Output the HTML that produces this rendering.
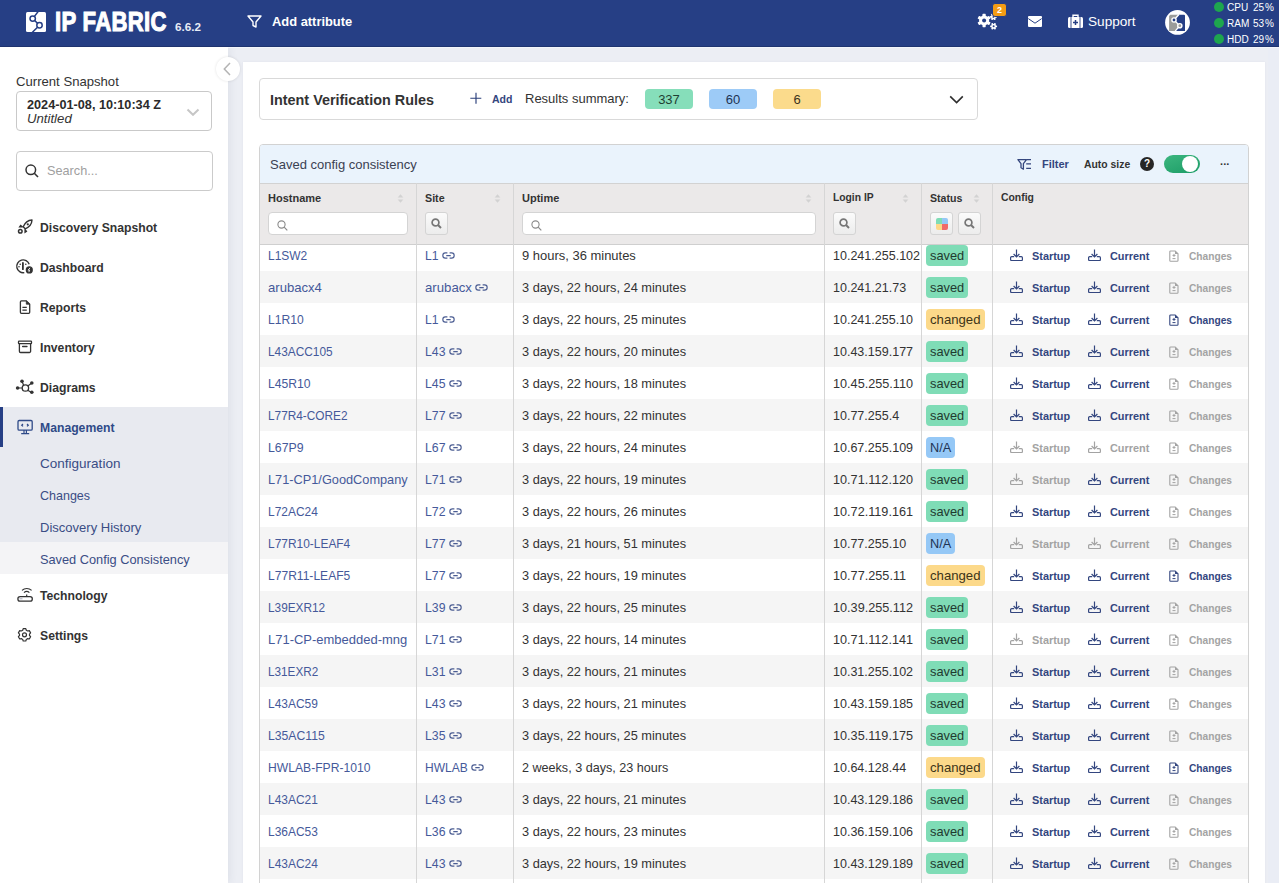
<!DOCTYPE html>
<html><head><meta charset="utf-8">
<style>
*{box-sizing:border-box;margin:0;padding:0}
html,body{width:1279px;height:883px;overflow:hidden}
body{position:relative;background:#eceef4;font-family:"Liberation Sans",sans-serif;color:#333}
.a{position:absolute;white-space:nowrap}
svg{display:block}
/* header */
#hdr{position:absolute;left:0;top:0;width:1279px;height:47px;background:#263f85;border-bottom:1px solid #1f3470}
.wt{color:#fff}
/* sidebar */
#side{position:absolute;left:0;top:47px;width:228px;height:836px;background:#fff;box-shadow:2px 0 8px rgba(40,50,80,0.07)}
.nav{position:absolute;left:40px;font-size:12.2px;font-weight:bold;color:#333;line-height:16px;margin-top:1px}
.navi{position:absolute;left:17px;width:16px;height:16px;color:#333}
.sub{position:absolute;left:40px;font-size:13px;color:#3a4d85;line-height:16px;margin-top:1px}
/* card */
#card{position:absolute;left:243px;top:62px;width:1022px;height:830px;background:#fff}
#intent{position:absolute;left:259px;top:78px;width:719px;height:42px;border:1px solid #d9d9d9;border-radius:4px;background:#fff}
.sumb{position:absolute;top:89px;width:48px;height:20px;border-radius:4px;font-size:13px;line-height:20px;padding-top:1px;text-align:center;color:#333}
/* table */
#tbl{position:absolute;left:259px;top:144px;width:990px;height:760px;border:1px solid #d2d2d2;border-radius:4px 4px 0 0;overflow:hidden;background:#fff}
#tbar{position:absolute;left:0;top:0;width:988px;height:39px;background:#eaf3fc;border-bottom:1px solid #d2d2d2}
#thead{position:absolute;left:0;top:39px;width:988px;height:61px;background:#ebe9e9;border-bottom:1px solid #cfcfcf;z-index:2}
.vline{position:absolute;top:38px;width:1px;height:740px;background:#d6d6d6;z-index:3}
.hl{position:absolute;top:7px;font-size:11px;font-weight:bold;color:#333;line-height:14px}
.sort{position:absolute;top:10px;width:7px;height:9px}
.fin{position:absolute;top:28px;height:23px;background:#fff;border:1px solid #d4d4d4;border-radius:4px}
.fbtn{position:absolute;top:28px;width:23px;height:23px;border:1px solid #d4d4d4;border-radius:3px;background:linear-gradient(#fbfbfb,#ececec)}
.row{position:absolute;left:0;width:988px;height:32px;z-index:1}
.row.odd{background:#fff}
.row.even{background:#f5f5f5}
.c{position:absolute;top:0;height:32px;line-height:32px;padding-top:1px;font-size:13px;color:#333;white-space:nowrap}
.t{display:inline-block;transform-origin:0 0}
.lkw{position:absolute;top:1px}
.c1{left:8px;color:#45599a}
.c2{left:165px;color:#45599a}
.c3{left:262px}
.c4{left:573px}
.c5{left:666px}
.c6{left:750px}
.lk{display:inline-block;vertical-align:middle;position:relative;top:-1px;color:#4a5c92}
.badge{position:absolute;top:6px;left:0;height:21.5px;line-height:21px;padding:0.5px 4px 0;border-radius:4px;font-size:13px;color:#2f3a3a}
.bs{background:#7fdcb6;color:#1f3a30}
.bc{background:#fcd98a;color:#3d3418}
.bn{background:#95c8f6;color:#1e3352}
.cf{position:relative;display:inline-block;height:32px;font-size:10.9px}
.cf .ic{position:absolute;top:9px;left:0}
.cf b{position:absolute;left:22px;top:0.5px;line-height:32px;font-weight:bold}
.cf.on{color:#33467f}
.cf.off{color:#a3a3a3}

.cf:nth-child(1){position:absolute;left:0}
.cf:nth-child(2){position:absolute;left:78px}
.cf:nth-child(3){position:absolute;left:158px}
.cf:nth-child(3) b{left:21px;font-size:10.2px;top:1.5px}
.cf .dc{top:10px;left:0.5px}
</style></head><body>

<!-- HEADER -->
<div id="hdr">
  <svg class="a" style="left:26px;top:12px" width="20" height="20" viewBox="0 0 20 20">
    <rect x="0" y="0" width="20" height="20" rx="1.5" fill="#fff"/>
    <path d="M12.2 -0.5L6.7 6.6L13.5 13.2L6.2 20.5" fill="none" stroke="#263f85" stroke-width="1.5"/>
    <circle cx="6.7" cy="6.6" r="2.7" fill="#fff" stroke="#263f85" stroke-width="1.5"/>
    <circle cx="13.5" cy="13.2" r="2.7" fill="#fff" stroke="#263f85" stroke-width="1.5"/>
  </svg>
  <div class="a wt" style="left:55px;top:6px;font-size:28px;line-height:32px;font-weight:bold;transform:scaleX(0.79);transform-origin:0 0;letter-spacing:0.4px;-webkit-text-stroke:1.1px #fff">IP FABRIC</div>
  <div class="a wt" style="left:175px;top:20px;font-size:11.7px;line-height:14px;font-weight:bold;color:#e8ecf6">6.6.2</div>
  <svg class="a" style="left:247px;top:15px" width="15" height="13" viewBox="0 0 15 13"><path d="M1 1h13L9 7v5L6 10.5V7z" fill="none" stroke="#fff" stroke-width="1.4" stroke-linejoin="round"/></svg>
  <div class="a wt" style="left:272px;top:14px;font-size:12.9px;line-height:16px;font-weight:bold">Add attribute</div>

  <svg class="a" style="left:976px;top:11px" width="24" height="22" viewBox="0 0 24 22"><circle cx="8.1" cy="9.5" r="5.0" fill="#fff"/><rect x="6.50" y="2.80" width="3.2" height="6.70" rx="0.6" fill="#fff" transform="rotate(0.0 8.1 9.5)"/><rect x="6.50" y="2.80" width="3.2" height="6.70" rx="0.6" fill="#fff" transform="rotate(60.0 8.1 9.5)"/><rect x="6.50" y="2.80" width="3.2" height="6.70" rx="0.6" fill="#fff" transform="rotate(120.0 8.1 9.5)"/><rect x="6.50" y="2.80" width="3.2" height="6.70" rx="0.6" fill="#fff" transform="rotate(180.0 8.1 9.5)"/><rect x="6.50" y="2.80" width="3.2" height="6.70" rx="0.6" fill="#fff" transform="rotate(240.0 8.1 9.5)"/><rect x="6.50" y="2.80" width="3.2" height="6.70" rx="0.6" fill="#fff" transform="rotate(300.0 8.1 9.5)"/><circle cx="8.1" cy="9.5" r="2.0" fill="#263f85"/><circle cx="17.4" cy="5.9" r="2.3" fill="#fff"/><rect x="16.50" y="2.50" width="1.8" height="3.40" rx="0.6" fill="#fff" transform="rotate(30.0 17.4 5.9)"/><rect x="16.50" y="2.50" width="1.8" height="3.40" rx="0.6" fill="#fff" transform="rotate(90.0 17.4 5.9)"/><rect x="16.50" y="2.50" width="1.8" height="3.40" rx="0.6" fill="#fff" transform="rotate(150.0 17.4 5.9)"/><rect x="16.50" y="2.50" width="1.8" height="3.40" rx="0.6" fill="#fff" transform="rotate(210.0 17.4 5.9)"/><rect x="16.50" y="2.50" width="1.8" height="3.40" rx="0.6" fill="#fff" transform="rotate(270.0 17.4 5.9)"/><rect x="16.50" y="2.50" width="1.8" height="3.40" rx="0.6" fill="#fff" transform="rotate(330.0 17.4 5.9)"/><circle cx="17.4" cy="5.9" r="0.9" fill="#263f85"/><circle cx="17.6" cy="15.3" r="2.4" fill="#fff"/><rect x="16.70" y="11.80" width="1.8" height="3.50" rx="0.6" fill="#fff" transform="rotate(30.0 17.6 15.3)"/><rect x="16.70" y="11.80" width="1.8" height="3.50" rx="0.6" fill="#fff" transform="rotate(90.0 17.6 15.3)"/><rect x="16.70" y="11.80" width="1.8" height="3.50" rx="0.6" fill="#fff" transform="rotate(150.0 17.6 15.3)"/><rect x="16.70" y="11.80" width="1.8" height="3.50" rx="0.6" fill="#fff" transform="rotate(210.0 17.6 15.3)"/><rect x="16.70" y="11.80" width="1.8" height="3.50" rx="0.6" fill="#fff" transform="rotate(270.0 17.6 15.3)"/><rect x="16.70" y="11.80" width="1.8" height="3.50" rx="0.6" fill="#fff" transform="rotate(330.0 17.6 15.3)"/><circle cx="17.6" cy="15.3" r="1.0" fill="#263f85"/></svg>
  <div class="a" style="left:992px;top:3px;width:15px;height:14px;background:#f39c14;border:1px solid #263f85;border-radius:3px;color:#fff;font-size:9px;font-weight:bold;line-height:12px;text-align:center">2</div>
  <svg class="a" style="left:1028px;top:16px" width="14" height="11" viewBox="0 0 14 11"><rect x="0" y="0" width="14" height="11" rx="1" fill="#fff"/><path d="M0.3 2.6L7 7.2 13.7 2.6" fill="none" stroke="#263f85" stroke-width="1"/></svg>
  <svg class="a" style="left:1068px;top:14px" width="15" height="14" viewBox="0 0 15 14"><path d="M5 3V1.2h5V3" fill="none" stroke="#fff" stroke-width="1.4"/><rect x="0" y="3" width="15" height="11" rx="1.5" fill="#fff"/><path d="M3 3v11M12 3v11" stroke="#263f85" stroke-width="0.9"/><path d="M7.5 6v5M5 8.5h5" stroke="#263f85" stroke-width="1.5"/></svg>
  <div class="a wt" style="left:1088px;top:14px;font-size:13.4px;line-height:16px"><span class="t" style="font-size:13.0px;transform:scaleX(1.046)">Support</span></div>

  <svg class="a" style="left:1165px;top:10px" width="25" height="25" viewBox="0 0 25 25">
    <circle cx="12.5" cy="12.4" r="12.4" fill="#fff"/>
    <path d="M5.3 4.8H13.7L9 10 14.8 15.7 10.4 20.9H4.1V6z" fill="#9b9c9a"/>
    <path d="M13.7 4.8H19a1 1 0 0 1 1 1V20.9H10.4L14.8 15.7 9 10z" fill="#263f85"/>
    <path d="M13.9 4.5L9 10 14.8 15.7 10.2 21.2" fill="none" stroke="#fff" stroke-width="1.3"/>
    <circle cx="9" cy="10" r="2.1" fill="#263f85" stroke="#fff" stroke-width="1.4"/>
    <circle cx="14.8" cy="15.7" r="2.1" fill="#9b9c9a" stroke="#fff" stroke-width="1.4"/>
  </svg>

  <div class="a" style="left:1214px;top:2px;width:10px;height:10px;border-radius:50%;background:#1ea64e"></div>
  <div class="a" style="left:1214px;top:18px;width:10px;height:10px;border-radius:50%;background:#1ea64e"></div>
  <div class="a" style="left:1214px;top:34px;width:10px;height:10px;border-radius:50%;background:#1ea64e"></div>
  <div class="a wt" style="left:1227px;top:1px;font-size:10px;line-height:14px">CPU</div>
<div class="a wt" style="left:1253px;top:1px;font-size:10px;line-height:14px">25</div>
<div class="a wt" style="left:1265px;top:1px;font-size:10px;line-height:14px">%</div>
<div class="a wt" style="left:1227px;top:17px;font-size:10px;line-height:14px">RAM</div>
<div class="a wt" style="left:1253px;top:17px;font-size:10px;line-height:14px">53</div>
<div class="a wt" style="left:1265px;top:17px;font-size:10px;line-height:14px">%</div>
<div class="a wt" style="left:1227px;top:33px;font-size:10px;line-height:14px">HDD</div>
<div class="a wt" style="left:1253px;top:33px;font-size:10px;line-height:14px">29</div>
<div class="a wt" style="left:1265px;top:33px;font-size:10px;line-height:14px">%</div>
</div>

<!-- SIDEBAR -->
<div id="side"></div>
<div class="a" style="left:16px;top:74px;font-size:13.2px;line-height:16px;color:#333"><span class="t" style="font-size:13.0px;transform:scaleX(1.009)">Current Snapshot</span></div>
<div class="a" style="left:16px;top:91px;width:196px;height:40px;border:1px solid #c9c9c9;border-radius:4px"></div>
<div class="a" style="left:27px;top:96.5px;font-size:12.7px;line-height:16px;font-weight:bold;color:#2b2b2b">2024-01-08, 10:10:34 Z</div>
<div class="a" style="left:27px;top:110.5px;font-size:13.2px;line-height:16px;font-style:italic;color:#333">Untitled</div>
<svg class="a" style="left:186px;top:107.5px" width="14" height="8" viewBox="0 0 14 8"><path d="M1.5 1.5l5.5 5.3 5.5-5.3" fill="none" stroke="#c6c6c6" stroke-width="2"/></svg>

<div class="a" style="left:16px;top:151px;width:197px;height:40px;border:1px solid #cbcbcb;border-radius:4px"></div>
<svg class="a" style="left:25px;top:164px" width="14" height="14" viewBox="0 0 14 14"><circle cx="5.8" cy="5.8" r="4.8" fill="none" stroke="#333" stroke-width="1.5"/><path d="M9.3 9.3L13 13" stroke="#333" stroke-width="1.6"/></svg>
<div class="a" style="left:47px;top:163px;font-size:13px;line-height:16px;color:#a0a0a0"><span class="t" style="font-size:13.0px;transform:scaleX(0.976)">Search...</span></div>

<!-- nav -->
<svg class="a" style="left:12px;top:214px" width="28" height="28" viewBox="0 0 28 28"><path d="M11.2 12.8C13 8.5 16 6.2 20 6c-0.2 4-2.5 7-6.8 8.8z" fill="none" stroke="#333" stroke-width="1.4" stroke-linejoin="round"/><circle cx="15.8" cy="10.3" r="1.1" fill="#333"/><path d="M11.2 12.8L8.5 10.6 6.4 13.6h4.2zM13.2 14.8l2.2 2.6-3 2v-4.2z" fill="#333"/><circle cx="8.3" cy="17.3" r="1.8" fill="none" stroke="#333" stroke-width="1.5"/></svg>
<div class="nav" style="top:219px">Discovery Snapshot</div>

<svg class="a" style="left:12px;top:254px" width="28" height="28" viewBox="0 0 28 28"><path d="M17.2 10.2A6.4 6.4 0 1 0 12.3 18.6" fill="none" stroke="#333" stroke-width="1.4"/><path d="M10.9 8.8v6.4" stroke="#333" stroke-width="1.8" stroke-linecap="round"/><circle cx="8.2" cy="10.2" r="0.8" fill="#333"/><circle cx="13.8" cy="10.2" r="0.8" fill="#333"/><circle cx="7" cy="12.8" r="0.8" fill="#333"/><circle cx="17.3" cy="15.9" r="3.6" fill="#333"/><path d="M18 13.9l-1.9 2.3h1.6l-0.9 1.9" fill="none" stroke="#fff" stroke-width="0.9"/></svg>
<div class="nav" style="top:259px">Dashboard</div>

<svg class="a" style="left:12px;top:294px" width="28" height="28" viewBox="0 0 28 28"><path d="M14.3 6.9H9.4a1 1 0 0 0-1 1v10.4a1 1 0 0 0 1 1h7.3a1 1 0 0 0 1-1V10.2z" fill="none" stroke="#333" stroke-width="1.3" stroke-linejoin="round"/><path d="M14.3 6.9v3.3h3.4z" fill="#333" stroke="#333" stroke-width="0.8" stroke-linejoin="round"/><path d="M10.4 13.4h4.4M10.4 16.2h4.4" stroke="#333" stroke-width="1.2"/></svg>
<div class="nav" style="top:299px">Reports</div>

<svg class="a" style="left:12px;top:334px" width="28" height="28" viewBox="0 0 28 28"><rect x="6.5" y="7.1" width="13" height="2.6" rx="0.6" fill="none" stroke="#333" stroke-width="1.3"/><path d="M7.4 9.7v7.6a1.2 1.2 0 0 0 1.2 1.2h8.8a1.2 1.2 0 0 0 1.2-1.2V9.7" fill="none" stroke="#333" stroke-width="1.3"/><path d="M10.6 12.5h4.4" stroke="#333" stroke-width="1.3" stroke-linecap="round"/></svg>
<div class="nav" style="top:339px">Inventory</div>

<svg class="a" style="left:12px;top:374px" width="28" height="28" viewBox="0 0 28 28"><circle cx="13.4" cy="14" r="3.2" fill="none" stroke="#333" stroke-width="1.3"/><path d="M5.6 14h4.6M10 7.3l1.6 3.9M19.8 9l-4 2.9M19.8 18.8l-4-2.6" stroke="#333" stroke-width="1.2"/><circle cx="5.6" cy="14" r="1.8" fill="#333"/><circle cx="10" cy="7.3" r="1.8" fill="#333"/><circle cx="19.8" cy="9" r="1.8" fill="#333"/><circle cx="19.8" cy="18.2" r="1.8" fill="#333"/></svg>
<div class="nav" style="top:379px">Diagrams</div>

<div class="a" style="left:0;top:407px;width:228px;height:135px;background:#e8eaf0"></div>
<div class="a" style="left:0;top:542px;width:228px;height:32px;background:#f4f4f6"></div>
<div class="a" style="left:0;top:407px;width:3px;height:40px;background:#263f85"></div>
<svg class="a" style="left:12px;top:413px" width="28" height="28" viewBox="0 0 28 28"><rect x="6" y="7.5" width="14.2" height="9.6" rx="1.2" fill="none" stroke="#2f4a88" stroke-width="1.3"/><path d="M12 17.1v3M14.4 17.1v3M9.2 20.6h8" stroke="#2f4a88" stroke-width="1.2"/><path d="M11 11l-1.3 1.2 1.3 1.2M15 11l1.3 1.2-1.3 1.2" fill="none" stroke="#2f4a88" stroke-width="1.2"/></svg>
<div class="nav" style="top:419px;color:#2f4a88">Management</div>
<div class="sub" style="top:455px"><span class="t" style="font-size:13.0px;transform:scaleX(1.040)">Configuration</span></div>
<div class="sub" style="top:487px"><span class="t" style="font-size:13.0px;transform:scaleX(0.962)">Changes</span></div>
<div class="sub" style="top:519px"><span class="t" style="font-size:13.0px;transform:scaleX(1.002)">Discovery History</span></div>
<div class="sub" style="top:551px"><span class="t" style="font-size:13.0px;transform:scaleX(0.982)">Saved Config Consistency</span></div>

<svg class="a" style="left:12px;top:581px" width="28" height="28" viewBox="0 0 28 28"><path d="M10 9.4a7 7 0 0 1 9.6 0M12 11.6a4 4 0 0 1 5.4 0M14.7 13.4v1.9" fill="none" stroke="#333" stroke-width="1.2"/><rect x="5.9" y="15.6" width="14.4" height="4.6" rx="2.2" fill="none" stroke="#333" stroke-width="1.3"/><path d="M7.5 17.8h3" stroke="#aab" stroke-width="1"/></svg>
<div class="nav" style="top:587px">Technology</div>

<svg class="a" style="left:12px;top:621px" width="28" height="28" viewBox="0 0 28 28"><circle cx="12.5" cy="13.8" r="2" fill="none" stroke="#333" stroke-width="1.2"/><path d="M11.2 7.6h2.6l0.5 1.6 1.4 0.8 1.6-0.4 1.3 2.3-1.1 1.2v1.4l1.1 1.2-1.3 2.3-1.6-0.4-1.4 0.8-0.5 1.6h-2.6l-0.5-1.6-1.4-0.8-1.6 0.4-1.3-2.3 1.1-1.2v-1.4l-1.1-1.2 1.3-2.3 1.6 0.4 1.4-0.8z" fill="none" stroke="#333" stroke-width="1.2" stroke-linejoin="round"/></svg>
<div class="nav" style="top:627px">Settings</div>

<!-- MAIN -->
<div class="a" style="left:1268px;top:47px;width:11px;height:836px;background:#eaedf5"></div>
<div class="a" style="left:228px;top:47px;width:1051px;height:1px;background:#f3f5fb"></div>
<div id="card" style="box-shadow:0 0 2px rgba(40,50,80,0.06)"></div>
<div class="a" style="left:216px;top:57px;width:24px;height:24px;border-radius:50%;background:#fff;box-shadow:0 0 3px rgba(0,0,0,0.12)"></div>
<svg class="a" style="left:223px;top:62px" width="8" height="14" viewBox="0 0 8 14"><path d="M7 1L1.3 7 7 13" fill="none" stroke="#b4b4b4" stroke-width="1.5"/></svg>

<div id="intent"></div>
<div class="a" style="left:270px;top:91px;font-size:14.4px;line-height:18px;font-weight:bold;color:#333">Intent Verification Rules</div>
<svg class="a" style="left:470px;top:92px" width="12" height="12" viewBox="0 0 12 12"><path d="M6 0.8v11M0.3 6.2h11" stroke="#2a3f7a" stroke-width="1.15"/></svg>
<div class="a" style="left:492px;top:91px;font-size:10.5px;line-height:16px;font-weight:bold;color:#34467e">Add</div>
<div class="a" style="left:525px;top:91px;font-size:13px;line-height:16px;color:#333"><span class="t" style="font-size:13.0px;transform:scaleX(0.999)">Results summary:</span></div>
<div class="sumb" style="left:645px;background:#86deba;color:#1f3f33">337</div>
<div class="sumb" style="left:709px;background:#9dcbf7;color:#1e3352">60</div>
<div class="sumb" style="left:773px;background:#fbdb8c;color:#3a3220">6</div>
<svg class="a" style="left:949px;top:95px" width="15" height="9" viewBox="0 0 15 9"><path d="M1.2 1.4L7.6 7.6 13.8 1.4" fill="none" stroke="#2e2e2e" stroke-width="1.6"/></svg>

<!-- TABLE -->
<div id="tbl">
  <div id="tbar">
    <div class="a" style="left:10px;top:12px;font-size:12.9px;line-height:16px;color:#3a4152"><span class="t" style="font-size:13.0px;transform:scaleX(1.000)">Saved config consistency</span></div>
    <svg class="a" style="left:757px;top:14px" width="15" height="11" viewBox="0 0 15 11"><path d="M0.9 0.7h8.6L6.4 4.6v5.6L4 8.8V4.6z" fill="none" stroke="#34467e" stroke-width="1.3" stroke-linejoin="round"/><path d="M9.8 0.6h4.2M9.2 4.9h4.8M9.2 9.4h4.8" stroke="#34467e" stroke-width="1.1"/></svg>
    <div class="a" style="left:782px;top:11px;font-size:11px;line-height:16px;font-weight:bold;color:#34467e">Filter</div>
    <div class="a" style="left:824px;top:12px;font-size:10.4px;line-height:16px;font-weight:bold;color:#333">Auto size</div>
    <div class="a" style="left:880px;top:12px;width:14px;height:14px;border-radius:50%;background:#262626;color:#fff;font-size:10px;font-weight:bold;line-height:14px;text-align:center">?</div>
    <div class="a" style="left:904px;top:10px;width:36px;height:18px;border-radius:9px;background:linear-gradient(160deg,#3cb67f,#1c9c66);"></div>
    <div class="a" style="left:922px;top:11px;width:16px;height:16px;border-radius:50%;background:#fff"></div>
    <div class="a" style="left:960px;top:12px;font-size:11px;line-height:14px;font-weight:bold;color:#333;letter-spacing:-0.5px">···</div>
  </div>
  <div id="thead">
    <div class="hl" style="left:8px">Hostname</div>
    <div class="hl" style="left:165px;font-size:10.7px">Site</div>
    <div class="hl" style="left:262px">Uptime</div>
    <div class="hl" style="left:573px;font-size:10.3px">Login IP</div>
    <div class="hl" style="left:670px;font-size:10.6px">Status</div>
    <div class="hl" style="left:741px;font-size:10.4px">Config</div>
    <svg class="sort" style="left:137px" width="7" height="10" viewBox="0 0 7 9"><path d="M3.5 0.3L6.3 3.6H0.7zM3.5 8.7L6.3 5.4H0.7z" fill="#d2d2d2"/></svg>
<svg class="sort" style="left:234px" width="7" height="10" viewBox="0 0 7 9"><path d="M3.5 0.3L6.3 3.6H0.7zM3.5 8.7L6.3 5.4H0.7z" fill="#d2d2d2"/></svg>
<svg class="sort" style="left:545px" width="7" height="10" viewBox="0 0 7 9"><path d="M3.5 0.3L6.3 3.6H0.7zM3.5 8.7L6.3 5.4H0.7z" fill="#d2d2d2"/></svg>
<svg class="sort" style="left:642px" width="7" height="10" viewBox="0 0 7 9"><path d="M3.5 0.3L6.3 3.6H0.7zM3.5 8.7L6.3 5.4H0.7z" fill="#d2d2d2"/></svg>
<svg class="sort" style="left:713px" width="7" height="10" viewBox="0 0 7 9"><path d="M3.5 0.3L6.3 3.6H0.7zM3.5 8.7L6.3 5.4H0.7z" fill="#d2d2d2"/></svg>
    <div class="fin" style="left:8px;width:140px"></div>
    <div class="fbtn" style="left:165px"></div>
    <div class="fin" style="left:262px;width:294px"></div>
    <div class="fbtn" style="left:573px"></div>
    <div class="fbtn" style="left:670px"></div>
    <div class="fbtn" style="left:698px"></div>
    <svg class="a" style="left:17px;top:36px" width="11" height="11" viewBox="0 0 11 11"><circle cx="4.5" cy="4.5" r="3.6" fill="none" stroke="#8a8a8a" stroke-width="1.1"/><path d="M7.2 7.2L10.3 10.3" stroke="#8a8a8a" stroke-width="1.2"/></svg>
<svg class="a" style="left:171px;top:34px" width="11" height="11" viewBox="0 0 11 11"><circle cx="4.5" cy="4.5" r="3.4" fill="none" stroke="#777" stroke-width="1.7"/><path d="M7 7L10 10" stroke="#777" stroke-width="2"/></svg>
<svg class="a" style="left:271px;top:36px" width="11" height="11" viewBox="0 0 11 11"><circle cx="4.5" cy="4.5" r="3.6" fill="none" stroke="#8a8a8a" stroke-width="1.1"/><path d="M7.2 7.2L10.3 10.3" stroke="#8a8a8a" stroke-width="1.2"/></svg>
<svg class="a" style="left:579px;top:34px" width="11" height="11" viewBox="0 0 11 11"><circle cx="4.5" cy="4.5" r="3.4" fill="none" stroke="#777" stroke-width="1.7"/><path d="M7 7L10 10" stroke="#777" stroke-width="2"/></svg>
<svg class="a" style="left:676px;top:34px" width="12" height="12" viewBox="0 0 12 12"><path d="M2 0H6V6H0V2A2 2 0 0 1 2 0z" fill="#7fdcb5"/><path d="M6 0H10A2 2 0 0 1 12 2V6H6z" fill="#95c8f6"/><path d="M0 6H6V12H2A2 2 0 0 1 0 10z" fill="#fcd888"/><path d="M6 6H12V10A2 2 0 0 1 10 12H6z" fill="#f06a6a"/></svg>
<svg class="a" style="left:704px;top:34px" width="11" height="11" viewBox="0 0 11 11"><circle cx="4.5" cy="4.5" r="3.4" fill="none" stroke="#777" stroke-width="1.7"/><path d="M7 7L10 10" stroke="#777" stroke-width="2"/></svg>
  </div>
  <div class="vline" style="left:156px"></div>
  <div class="vline" style="left:253px"></div>
  <div class="vline" style="left:564px"></div>
  <div class="vline" style="left:661px"></div>
  <div class="vline" style="left:732px"></div>
<div class="row odd" style="top:93.5px"><div class="c c1"><span class="t" style="transform:scaleX(0.920)">L1SW2</span></div><div class="c c2"><span class="t" style="transform:scaleX(0.934)">L1</span><span class="lkw" style="left:16.5px"><svg class="lk" width="13" height="7" viewBox="0 0 14 7" preserveAspectRatio="none"><path d="M5.8 0.8H3.6a2.7 2.7 0 0 0 0 5.4H5.8M8.2 0.8h2.2a2.7 2.7 0 0 1 0 5.4H8.2M4.6 3.5h4.8" fill="none" stroke="currentColor" stroke-width="1.25"/></svg></span></div><div class="c c3"><span class="t" style="transform:scaleX(0.997)">9 hours, 36 minutes</span></div><div class="c c4"><span class="t" style="transform:scaleX(0.963)">10.241.255.102</span></div><div class="c c5"><span class="badge bs" style="width:42.2px"><span class="t" style="transform:scaleX(0.986)">saved</span></span></div><div class="c c6"><span class="cf on"><svg class="ic" width="13" height="12" viewBox="0 0 13 12"><path d="M4.2 7.7H1.7a1.1 1.1 0 0 0-1.1 1.1v1.7a1.1 1.1 0 0 0 1.1 1.1h9.6a1.1 1.1 0 0 0 1.1-1.1V8.8a1.1 1.1 0 0 0-1.1-1.1H8.8M6.5 0.6v7.4M3.6 5l2.9 2.9L9.4 5" fill="none" stroke="currentColor" stroke-width="1.2"/></svg><b>Startup</b></span><span class="cf on"><svg class="ic" width="13" height="12" viewBox="0 0 13 12"><path d="M4.2 7.7H1.7a1.1 1.1 0 0 0-1.1 1.1v1.7a1.1 1.1 0 0 0 1.1 1.1h9.6a1.1 1.1 0 0 0 1.1-1.1V8.8a1.1 1.1 0 0 0-1.1-1.1H8.8M6.5 0.6v7.4M3.6 5l2.9 2.9L9.4 5" fill="none" stroke="currentColor" stroke-width="1.2"/></svg><b>Current</b></span><span class="cf off"><svg class="ic dc" width="10" height="12" viewBox="0 0 10 12"><path d="M1.6 1h4.6l2.8 2.8v6.6a0.8 0.8 0 0 1-0.8 0.8H1.6a0.8 0.8 0 0 1-0.8-0.8V1.8a0.8 0.8 0 0 1 0.8-0.8z" fill="none" stroke="currentColor" stroke-width="1.1"/><path d="M6 1v3h3z" fill="currentColor"/><path d="M5 3.9v3M3.5 5.4h3M3.5 8.6h3" fill="none" stroke="currentColor" stroke-width="1"/></svg><b>Changes</b></span></div></div>
<div class="row even" style="top:125.5px"><div class="c c1"><span class="t" style="transform:scaleX(1.008)">arubacx4</span></div><div class="c c2"><span class="t" style="transform:scaleX(1.015)">arubacx</span><span class="lkw" style="left:49.9px"><svg class="lk" width="13" height="7" viewBox="0 0 14 7" preserveAspectRatio="none"><path d="M5.8 0.8H3.6a2.7 2.7 0 0 0 0 5.4H5.8M8.2 0.8h2.2a2.7 2.7 0 0 1 0 5.4H8.2M4.6 3.5h4.8" fill="none" stroke="currentColor" stroke-width="1.25"/></svg></span></div><div class="c c3"><span class="t" style="transform:scaleX(0.983)">3 days, 22 hours, 24 minutes</span></div><div class="c c4"><span class="t" style="transform:scaleX(0.963)">10.241.21.73</span></div><div class="c c5"><span class="badge bs" style="width:42.2px"><span class="t" style="transform:scaleX(0.986)">saved</span></span></div><div class="c c6"><span class="cf on"><svg class="ic" width="13" height="12" viewBox="0 0 13 12"><path d="M4.2 7.7H1.7a1.1 1.1 0 0 0-1.1 1.1v1.7a1.1 1.1 0 0 0 1.1 1.1h9.6a1.1 1.1 0 0 0 1.1-1.1V8.8a1.1 1.1 0 0 0-1.1-1.1H8.8M6.5 0.6v7.4M3.6 5l2.9 2.9L9.4 5" fill="none" stroke="currentColor" stroke-width="1.2"/></svg><b>Startup</b></span><span class="cf on"><svg class="ic" width="13" height="12" viewBox="0 0 13 12"><path d="M4.2 7.7H1.7a1.1 1.1 0 0 0-1.1 1.1v1.7a1.1 1.1 0 0 0 1.1 1.1h9.6a1.1 1.1 0 0 0 1.1-1.1V8.8a1.1 1.1 0 0 0-1.1-1.1H8.8M6.5 0.6v7.4M3.6 5l2.9 2.9L9.4 5" fill="none" stroke="currentColor" stroke-width="1.2"/></svg><b>Current</b></span><span class="cf off"><svg class="ic dc" width="10" height="12" viewBox="0 0 10 12"><path d="M1.6 1h4.6l2.8 2.8v6.6a0.8 0.8 0 0 1-0.8 0.8H1.6a0.8 0.8 0 0 1-0.8-0.8V1.8a0.8 0.8 0 0 1 0.8-0.8z" fill="none" stroke="currentColor" stroke-width="1.1"/><path d="M6 1v3h3z" fill="currentColor"/><path d="M5 3.9v3M3.5 5.4h3M3.5 8.6h3" fill="none" stroke="currentColor" stroke-width="1"/></svg><b>Changes</b></span></div></div>
<div class="row odd" style="top:157.5px"><div class="c c1"><span class="t" style="transform:scaleX(0.930)">L1R10</span></div><div class="c c2"><span class="t" style="transform:scaleX(0.934)">L1</span><span class="lkw" style="left:16.5px"><svg class="lk" width="13" height="7" viewBox="0 0 14 7" preserveAspectRatio="none"><path d="M5.8 0.8H3.6a2.7 2.7 0 0 0 0 5.4H5.8M8.2 0.8h2.2a2.7 2.7 0 0 1 0 5.4H8.2M4.6 3.5h4.8" fill="none" stroke="currentColor" stroke-width="1.25"/></svg></span></div><div class="c c3"><span class="t" style="transform:scaleX(0.983)">3 days, 22 hours, 25 minutes</span></div><div class="c c4"><span class="t" style="transform:scaleX(0.963)">10.241.255.10</span></div><div class="c c5"><span class="badge bc" style="width:58.5px"><span class="t" style="transform:scaleX(1.012)">changed</span></span></div><div class="c c6"><span class="cf on"><svg class="ic" width="13" height="12" viewBox="0 0 13 12"><path d="M4.2 7.7H1.7a1.1 1.1 0 0 0-1.1 1.1v1.7a1.1 1.1 0 0 0 1.1 1.1h9.6a1.1 1.1 0 0 0 1.1-1.1V8.8a1.1 1.1 0 0 0-1.1-1.1H8.8M6.5 0.6v7.4M3.6 5l2.9 2.9L9.4 5" fill="none" stroke="currentColor" stroke-width="1.2"/></svg><b>Startup</b></span><span class="cf on"><svg class="ic" width="13" height="12" viewBox="0 0 13 12"><path d="M4.2 7.7H1.7a1.1 1.1 0 0 0-1.1 1.1v1.7a1.1 1.1 0 0 0 1.1 1.1h9.6a1.1 1.1 0 0 0 1.1-1.1V8.8a1.1 1.1 0 0 0-1.1-1.1H8.8M6.5 0.6v7.4M3.6 5l2.9 2.9L9.4 5" fill="none" stroke="currentColor" stroke-width="1.2"/></svg><b>Current</b></span><span class="cf on"><svg class="ic dc" width="10" height="12" viewBox="0 0 10 12"><path d="M1.6 1h4.6l2.8 2.8v6.6a0.8 0.8 0 0 1-0.8 0.8H1.6a0.8 0.8 0 0 1-0.8-0.8V1.8a0.8 0.8 0 0 1 0.8-0.8z" fill="none" stroke="currentColor" stroke-width="1.1"/><path d="M6 1v3h3z" fill="currentColor"/><path d="M5 3.9v3M3.5 5.4h3M3.5 8.6h3" fill="none" stroke="currentColor" stroke-width="1"/></svg><b>Changes</b></span></div></div>
<div class="row even" style="top:189.5px"><div class="c c1"><span class="t" style="transform:scaleX(0.913)">L43ACC105</span></div><div class="c c2"><span class="t" style="transform:scaleX(0.944)">L43</span><span class="lkw" style="left:23.5px"><svg class="lk" width="13" height="7" viewBox="0 0 14 7" preserveAspectRatio="none"><path d="M5.8 0.8H3.6a2.7 2.7 0 0 0 0 5.4H5.8M8.2 0.8h2.2a2.7 2.7 0 0 1 0 5.4H8.2M4.6 3.5h4.8" fill="none" stroke="currentColor" stroke-width="1.25"/></svg></span></div><div class="c c3"><span class="t" style="transform:scaleX(0.983)">3 days, 22 hours, 20 minutes</span></div><div class="c c4"><span class="t" style="transform:scaleX(0.963)">10.43.159.177</span></div><div class="c c5"><span class="badge bs" style="width:42.2px"><span class="t" style="transform:scaleX(0.986)">saved</span></span></div><div class="c c6"><span class="cf on"><svg class="ic" width="13" height="12" viewBox="0 0 13 12"><path d="M4.2 7.7H1.7a1.1 1.1 0 0 0-1.1 1.1v1.7a1.1 1.1 0 0 0 1.1 1.1h9.6a1.1 1.1 0 0 0 1.1-1.1V8.8a1.1 1.1 0 0 0-1.1-1.1H8.8M6.5 0.6v7.4M3.6 5l2.9 2.9L9.4 5" fill="none" stroke="currentColor" stroke-width="1.2"/></svg><b>Startup</b></span><span class="cf on"><svg class="ic" width="13" height="12" viewBox="0 0 13 12"><path d="M4.2 7.7H1.7a1.1 1.1 0 0 0-1.1 1.1v1.7a1.1 1.1 0 0 0 1.1 1.1h9.6a1.1 1.1 0 0 0 1.1-1.1V8.8a1.1 1.1 0 0 0-1.1-1.1H8.8M6.5 0.6v7.4M3.6 5l2.9 2.9L9.4 5" fill="none" stroke="currentColor" stroke-width="1.2"/></svg><b>Current</b></span><span class="cf off"><svg class="ic dc" width="10" height="12" viewBox="0 0 10 12"><path d="M1.6 1h4.6l2.8 2.8v6.6a0.8 0.8 0 0 1-0.8 0.8H1.6a0.8 0.8 0 0 1-0.8-0.8V1.8a0.8 0.8 0 0 1 0.8-0.8z" fill="none" stroke="currentColor" stroke-width="1.1"/><path d="M6 1v3h3z" fill="currentColor"/><path d="M5 3.9v3M3.5 5.4h3M3.5 8.6h3" fill="none" stroke="currentColor" stroke-width="1"/></svg><b>Changes</b></span></div></div>
<div class="row odd" style="top:221.5px"><div class="c c1"><span class="t" style="transform:scaleX(0.935)">L45R10</span></div><div class="c c2"><span class="t" style="transform:scaleX(0.944)">L45</span><span class="lkw" style="left:23.5px"><svg class="lk" width="13" height="7" viewBox="0 0 14 7" preserveAspectRatio="none"><path d="M5.8 0.8H3.6a2.7 2.7 0 0 0 0 5.4H5.8M8.2 0.8h2.2a2.7 2.7 0 0 1 0 5.4H8.2M4.6 3.5h4.8" fill="none" stroke="currentColor" stroke-width="1.25"/></svg></span></div><div class="c c3"><span class="t" style="transform:scaleX(0.983)">3 days, 22 hours, 18 minutes</span></div><div class="c c4"><span class="t" style="transform:scaleX(0.974)">10.45.255.110</span></div><div class="c c5"><span class="badge bs" style="width:42.2px"><span class="t" style="transform:scaleX(0.986)">saved</span></span></div><div class="c c6"><span class="cf on"><svg class="ic" width="13" height="12" viewBox="0 0 13 12"><path d="M4.2 7.7H1.7a1.1 1.1 0 0 0-1.1 1.1v1.7a1.1 1.1 0 0 0 1.1 1.1h9.6a1.1 1.1 0 0 0 1.1-1.1V8.8a1.1 1.1 0 0 0-1.1-1.1H8.8M6.5 0.6v7.4M3.6 5l2.9 2.9L9.4 5" fill="none" stroke="currentColor" stroke-width="1.2"/></svg><b>Startup</b></span><span class="cf on"><svg class="ic" width="13" height="12" viewBox="0 0 13 12"><path d="M4.2 7.7H1.7a1.1 1.1 0 0 0-1.1 1.1v1.7a1.1 1.1 0 0 0 1.1 1.1h9.6a1.1 1.1 0 0 0 1.1-1.1V8.8a1.1 1.1 0 0 0-1.1-1.1H8.8M6.5 0.6v7.4M3.6 5l2.9 2.9L9.4 5" fill="none" stroke="currentColor" stroke-width="1.2"/></svg><b>Current</b></span><span class="cf off"><svg class="ic dc" width="10" height="12" viewBox="0 0 10 12"><path d="M1.6 1h4.6l2.8 2.8v6.6a0.8 0.8 0 0 1-0.8 0.8H1.6a0.8 0.8 0 0 1-0.8-0.8V1.8a0.8 0.8 0 0 1 0.8-0.8z" fill="none" stroke="currentColor" stroke-width="1.1"/><path d="M6 1v3h3z" fill="currentColor"/><path d="M5 3.9v3M3.5 5.4h3M3.5 8.6h3" fill="none" stroke="currentColor" stroke-width="1"/></svg><b>Changes</b></span></div></div>
<div class="row even" style="top:253.5px"><div class="c c1"><span class="t" style="transform:scaleX(0.909)">L77R4-CORE2</span></div><div class="c c2"><span class="t" style="transform:scaleX(0.944)">L77</span><span class="lkw" style="left:23.5px"><svg class="lk" width="13" height="7" viewBox="0 0 14 7" preserveAspectRatio="none"><path d="M5.8 0.8H3.6a2.7 2.7 0 0 0 0 5.4H5.8M8.2 0.8h2.2a2.7 2.7 0 0 1 0 5.4H8.2M4.6 3.5h4.8" fill="none" stroke="currentColor" stroke-width="1.25"/></svg></span></div><div class="c c3"><span class="t" style="transform:scaleX(0.983)">3 days, 22 hours, 22 minutes</span></div><div class="c c4"><span class="t" style="transform:scaleX(0.963)">10.77.255.4</span></div><div class="c c5"><span class="badge bs" style="width:42.2px"><span class="t" style="transform:scaleX(0.986)">saved</span></span></div><div class="c c6"><span class="cf on"><svg class="ic" width="13" height="12" viewBox="0 0 13 12"><path d="M4.2 7.7H1.7a1.1 1.1 0 0 0-1.1 1.1v1.7a1.1 1.1 0 0 0 1.1 1.1h9.6a1.1 1.1 0 0 0 1.1-1.1V8.8a1.1 1.1 0 0 0-1.1-1.1H8.8M6.5 0.6v7.4M3.6 5l2.9 2.9L9.4 5" fill="none" stroke="currentColor" stroke-width="1.2"/></svg><b>Startup</b></span><span class="cf on"><svg class="ic" width="13" height="12" viewBox="0 0 13 12"><path d="M4.2 7.7H1.7a1.1 1.1 0 0 0-1.1 1.1v1.7a1.1 1.1 0 0 0 1.1 1.1h9.6a1.1 1.1 0 0 0 1.1-1.1V8.8a1.1 1.1 0 0 0-1.1-1.1H8.8M6.5 0.6v7.4M3.6 5l2.9 2.9L9.4 5" fill="none" stroke="currentColor" stroke-width="1.2"/></svg><b>Current</b></span><span class="cf off"><svg class="ic dc" width="10" height="12" viewBox="0 0 10 12"><path d="M1.6 1h4.6l2.8 2.8v6.6a0.8 0.8 0 0 1-0.8 0.8H1.6a0.8 0.8 0 0 1-0.8-0.8V1.8a0.8 0.8 0 0 1 0.8-0.8z" fill="none" stroke="currentColor" stroke-width="1.1"/><path d="M6 1v3h3z" fill="currentColor"/><path d="M5 3.9v3M3.5 5.4h3M3.5 8.6h3" fill="none" stroke="currentColor" stroke-width="1"/></svg><b>Changes</b></span></div></div>
<div class="row odd" style="top:285.5px"><div class="c c1"><span class="t" style="transform:scaleX(0.947)">L67P9</span></div><div class="c c2"><span class="t" style="transform:scaleX(0.944)">L67</span><span class="lkw" style="left:23.5px"><svg class="lk" width="13" height="7" viewBox="0 0 14 7" preserveAspectRatio="none"><path d="M5.8 0.8H3.6a2.7 2.7 0 0 0 0 5.4H5.8M8.2 0.8h2.2a2.7 2.7 0 0 1 0 5.4H8.2M4.6 3.5h4.8" fill="none" stroke="currentColor" stroke-width="1.25"/></svg></span></div><div class="c c3"><span class="t" style="transform:scaleX(0.983)">3 days, 22 hours, 24 minutes</span></div><div class="c c4"><span class="t" style="transform:scaleX(0.963)">10.67.255.109</span></div><div class="c c5"><span class="badge bn" style="width:29.2px"><span class="t" style="transform:scaleX(0.979)">N/A</span></span></div><div class="c c6"><span class="cf off"><svg class="ic" width="13" height="12" viewBox="0 0 13 12"><path d="M4.2 7.7H1.7a1.1 1.1 0 0 0-1.1 1.1v1.7a1.1 1.1 0 0 0 1.1 1.1h9.6a1.1 1.1 0 0 0 1.1-1.1V8.8a1.1 1.1 0 0 0-1.1-1.1H8.8M6.5 0.6v7.4M3.6 5l2.9 2.9L9.4 5" fill="none" stroke="currentColor" stroke-width="1.2"/></svg><b>Startup</b></span><span class="cf off"><svg class="ic" width="13" height="12" viewBox="0 0 13 12"><path d="M4.2 7.7H1.7a1.1 1.1 0 0 0-1.1 1.1v1.7a1.1 1.1 0 0 0 1.1 1.1h9.6a1.1 1.1 0 0 0 1.1-1.1V8.8a1.1 1.1 0 0 0-1.1-1.1H8.8M6.5 0.6v7.4M3.6 5l2.9 2.9L9.4 5" fill="none" stroke="currentColor" stroke-width="1.2"/></svg><b>Current</b></span><span class="cf off"><svg class="ic dc" width="10" height="12" viewBox="0 0 10 12"><path d="M1.6 1h4.6l2.8 2.8v6.6a0.8 0.8 0 0 1-0.8 0.8H1.6a0.8 0.8 0 0 1-0.8-0.8V1.8a0.8 0.8 0 0 1 0.8-0.8z" fill="none" stroke="currentColor" stroke-width="1.1"/><path d="M6 1v3h3z" fill="currentColor"/><path d="M5 3.9v3M3.5 5.4h3M3.5 8.6h3" fill="none" stroke="currentColor" stroke-width="1"/></svg><b>Changes</b></span></div></div>
<div class="row even" style="top:317.5px"><div class="c c1"><span class="t" style="transform:scaleX(0.981)">L71-CP1/GoodCompany</span></div><div class="c c2"><span class="t" style="transform:scaleX(0.944)">L71</span><span class="lkw" style="left:23.5px"><svg class="lk" width="13" height="7" viewBox="0 0 14 7" preserveAspectRatio="none"><path d="M5.8 0.8H3.6a2.7 2.7 0 0 0 0 5.4H5.8M8.2 0.8h2.2a2.7 2.7 0 0 1 0 5.4H8.2M4.6 3.5h4.8" fill="none" stroke="currentColor" stroke-width="1.25"/></svg></span></div><div class="c c3"><span class="t" style="transform:scaleX(0.983)">3 days, 22 hours, 19 minutes</span></div><div class="c c4"><span class="t" style="transform:scaleX(0.974)">10.71.112.120</span></div><div class="c c5"><span class="badge bs" style="width:42.2px"><span class="t" style="transform:scaleX(0.986)">saved</span></span></div><div class="c c6"><span class="cf off"><svg class="ic" width="13" height="12" viewBox="0 0 13 12"><path d="M4.2 7.7H1.7a1.1 1.1 0 0 0-1.1 1.1v1.7a1.1 1.1 0 0 0 1.1 1.1h9.6a1.1 1.1 0 0 0 1.1-1.1V8.8a1.1 1.1 0 0 0-1.1-1.1H8.8M6.5 0.6v7.4M3.6 5l2.9 2.9L9.4 5" fill="none" stroke="currentColor" stroke-width="1.2"/></svg><b>Startup</b></span><span class="cf on"><svg class="ic" width="13" height="12" viewBox="0 0 13 12"><path d="M4.2 7.7H1.7a1.1 1.1 0 0 0-1.1 1.1v1.7a1.1 1.1 0 0 0 1.1 1.1h9.6a1.1 1.1 0 0 0 1.1-1.1V8.8a1.1 1.1 0 0 0-1.1-1.1H8.8M6.5 0.6v7.4M3.6 5l2.9 2.9L9.4 5" fill="none" stroke="currentColor" stroke-width="1.2"/></svg><b>Current</b></span><span class="cf off"><svg class="ic dc" width="10" height="12" viewBox="0 0 10 12"><path d="M1.6 1h4.6l2.8 2.8v6.6a0.8 0.8 0 0 1-0.8 0.8H1.6a0.8 0.8 0 0 1-0.8-0.8V1.8a0.8 0.8 0 0 1 0.8-0.8z" fill="none" stroke="currentColor" stroke-width="1.1"/><path d="M6 1v3h3z" fill="currentColor"/><path d="M5 3.9v3M3.5 5.4h3M3.5 8.6h3" fill="none" stroke="currentColor" stroke-width="1"/></svg><b>Changes</b></span></div></div>
<div class="row odd" style="top:349.5px"><div class="c c1"><span class="t" style="transform:scaleX(0.919)">L72AC24</span></div><div class="c c2"><span class="t" style="transform:scaleX(0.944)">L72</span><span class="lkw" style="left:23.5px"><svg class="lk" width="13" height="7" viewBox="0 0 14 7" preserveAspectRatio="none"><path d="M5.8 0.8H3.6a2.7 2.7 0 0 0 0 5.4H5.8M8.2 0.8h2.2a2.7 2.7 0 0 1 0 5.4H8.2M4.6 3.5h4.8" fill="none" stroke="currentColor" stroke-width="1.25"/></svg></span></div><div class="c c3"><span class="t" style="transform:scaleX(0.983)">3 days, 22 hours, 26 minutes</span></div><div class="c c4"><span class="t" style="transform:scaleX(0.974)">10.72.119.161</span></div><div class="c c5"><span class="badge bs" style="width:42.2px"><span class="t" style="transform:scaleX(0.986)">saved</span></span></div><div class="c c6"><span class="cf on"><svg class="ic" width="13" height="12" viewBox="0 0 13 12"><path d="M4.2 7.7H1.7a1.1 1.1 0 0 0-1.1 1.1v1.7a1.1 1.1 0 0 0 1.1 1.1h9.6a1.1 1.1 0 0 0 1.1-1.1V8.8a1.1 1.1 0 0 0-1.1-1.1H8.8M6.5 0.6v7.4M3.6 5l2.9 2.9L9.4 5" fill="none" stroke="currentColor" stroke-width="1.2"/></svg><b>Startup</b></span><span class="cf on"><svg class="ic" width="13" height="12" viewBox="0 0 13 12"><path d="M4.2 7.7H1.7a1.1 1.1 0 0 0-1.1 1.1v1.7a1.1 1.1 0 0 0 1.1 1.1h9.6a1.1 1.1 0 0 0 1.1-1.1V8.8a1.1 1.1 0 0 0-1.1-1.1H8.8M6.5 0.6v7.4M3.6 5l2.9 2.9L9.4 5" fill="none" stroke="currentColor" stroke-width="1.2"/></svg><b>Current</b></span><span class="cf off"><svg class="ic dc" width="10" height="12" viewBox="0 0 10 12"><path d="M1.6 1h4.6l2.8 2.8v6.6a0.8 0.8 0 0 1-0.8 0.8H1.6a0.8 0.8 0 0 1-0.8-0.8V1.8a0.8 0.8 0 0 1 0.8-0.8z" fill="none" stroke="currentColor" stroke-width="1.1"/><path d="M6 1v3h3z" fill="currentColor"/><path d="M5 3.9v3M3.5 5.4h3M3.5 8.6h3" fill="none" stroke="currentColor" stroke-width="1"/></svg><b>Changes</b></span></div></div>
<div class="row even" style="top:381.5px"><div class="c c1"><span class="t" style="transform:scaleX(0.918)">L77R10-LEAF4</span></div><div class="c c2"><span class="t" style="transform:scaleX(0.944)">L77</span><span class="lkw" style="left:23.5px"><svg class="lk" width="13" height="7" viewBox="0 0 14 7" preserveAspectRatio="none"><path d="M5.8 0.8H3.6a2.7 2.7 0 0 0 0 5.4H5.8M8.2 0.8h2.2a2.7 2.7 0 0 1 0 5.4H8.2M4.6 3.5h4.8" fill="none" stroke="currentColor" stroke-width="1.25"/></svg></span></div><div class="c c3"><span class="t" style="transform:scaleX(0.983)">3 days, 21 hours, 51 minutes</span></div><div class="c c4"><span class="t" style="transform:scaleX(0.963)">10.77.255.10</span></div><div class="c c5"><span class="badge bn" style="width:29.2px"><span class="t" style="transform:scaleX(0.979)">N/A</span></span></div><div class="c c6"><span class="cf off"><svg class="ic" width="13" height="12" viewBox="0 0 13 12"><path d="M4.2 7.7H1.7a1.1 1.1 0 0 0-1.1 1.1v1.7a1.1 1.1 0 0 0 1.1 1.1h9.6a1.1 1.1 0 0 0 1.1-1.1V8.8a1.1 1.1 0 0 0-1.1-1.1H8.8M6.5 0.6v7.4M3.6 5l2.9 2.9L9.4 5" fill="none" stroke="currentColor" stroke-width="1.2"/></svg><b>Startup</b></span><span class="cf off"><svg class="ic" width="13" height="12" viewBox="0 0 13 12"><path d="M4.2 7.7H1.7a1.1 1.1 0 0 0-1.1 1.1v1.7a1.1 1.1 0 0 0 1.1 1.1h9.6a1.1 1.1 0 0 0 1.1-1.1V8.8a1.1 1.1 0 0 0-1.1-1.1H8.8M6.5 0.6v7.4M3.6 5l2.9 2.9L9.4 5" fill="none" stroke="currentColor" stroke-width="1.2"/></svg><b>Current</b></span><span class="cf off"><svg class="ic dc" width="10" height="12" viewBox="0 0 10 12"><path d="M1.6 1h4.6l2.8 2.8v6.6a0.8 0.8 0 0 1-0.8 0.8H1.6a0.8 0.8 0 0 1-0.8-0.8V1.8a0.8 0.8 0 0 1 0.8-0.8z" fill="none" stroke="currentColor" stroke-width="1.1"/><path d="M6 1v3h3z" fill="currentColor"/><path d="M5 3.9v3M3.5 5.4h3M3.5 8.6h3" fill="none" stroke="currentColor" stroke-width="1"/></svg><b>Changes</b></span></div></div>
<div class="row odd" style="top:413.5px"><div class="c c1"><span class="t" style="transform:scaleX(0.928)">L77R11-LEAF5</span></div><div class="c c2"><span class="t" style="transform:scaleX(0.944)">L77</span><span class="lkw" style="left:23.5px"><svg class="lk" width="13" height="7" viewBox="0 0 14 7" preserveAspectRatio="none"><path d="M5.8 0.8H3.6a2.7 2.7 0 0 0 0 5.4H5.8M8.2 0.8h2.2a2.7 2.7 0 0 1 0 5.4H8.2M4.6 3.5h4.8" fill="none" stroke="currentColor" stroke-width="1.25"/></svg></span></div><div class="c c3"><span class="t" style="transform:scaleX(0.983)">3 days, 22 hours, 19 minutes</span></div><div class="c c4"><span class="t" style="transform:scaleX(0.975)">10.77.255.11</span></div><div class="c c5"><span class="badge bc" style="width:58.5px"><span class="t" style="transform:scaleX(1.012)">changed</span></span></div><div class="c c6"><span class="cf on"><svg class="ic" width="13" height="12" viewBox="0 0 13 12"><path d="M4.2 7.7H1.7a1.1 1.1 0 0 0-1.1 1.1v1.7a1.1 1.1 0 0 0 1.1 1.1h9.6a1.1 1.1 0 0 0 1.1-1.1V8.8a1.1 1.1 0 0 0-1.1-1.1H8.8M6.5 0.6v7.4M3.6 5l2.9 2.9L9.4 5" fill="none" stroke="currentColor" stroke-width="1.2"/></svg><b>Startup</b></span><span class="cf on"><svg class="ic" width="13" height="12" viewBox="0 0 13 12"><path d="M4.2 7.7H1.7a1.1 1.1 0 0 0-1.1 1.1v1.7a1.1 1.1 0 0 0 1.1 1.1h9.6a1.1 1.1 0 0 0 1.1-1.1V8.8a1.1 1.1 0 0 0-1.1-1.1H8.8M6.5 0.6v7.4M3.6 5l2.9 2.9L9.4 5" fill="none" stroke="currentColor" stroke-width="1.2"/></svg><b>Current</b></span><span class="cf on"><svg class="ic dc" width="10" height="12" viewBox="0 0 10 12"><path d="M1.6 1h4.6l2.8 2.8v6.6a0.8 0.8 0 0 1-0.8 0.8H1.6a0.8 0.8 0 0 1-0.8-0.8V1.8a0.8 0.8 0 0 1 0.8-0.8z" fill="none" stroke="currentColor" stroke-width="1.1"/><path d="M6 1v3h3z" fill="currentColor"/><path d="M5 3.9v3M3.5 5.4h3M3.5 8.6h3" fill="none" stroke="currentColor" stroke-width="1"/></svg><b>Changes</b></span></div></div>
<div class="row even" style="top:445.5px"><div class="c c1"><span class="t" style="transform:scaleX(0.909)">L39EXR12</span></div><div class="c c2"><span class="t" style="transform:scaleX(0.944)">L39</span><span class="lkw" style="left:23.5px"><svg class="lk" width="13" height="7" viewBox="0 0 14 7" preserveAspectRatio="none"><path d="M5.8 0.8H3.6a2.7 2.7 0 0 0 0 5.4H5.8M8.2 0.8h2.2a2.7 2.7 0 0 1 0 5.4H8.2M4.6 3.5h4.8" fill="none" stroke="currentColor" stroke-width="1.25"/></svg></span></div><div class="c c3"><span class="t" style="transform:scaleX(0.983)">3 days, 22 hours, 25 minutes</span></div><div class="c c4"><span class="t" style="transform:scaleX(0.974)">10.39.255.112</span></div><div class="c c5"><span class="badge bs" style="width:42.2px"><span class="t" style="transform:scaleX(0.986)">saved</span></span></div><div class="c c6"><span class="cf on"><svg class="ic" width="13" height="12" viewBox="0 0 13 12"><path d="M4.2 7.7H1.7a1.1 1.1 0 0 0-1.1 1.1v1.7a1.1 1.1 0 0 0 1.1 1.1h9.6a1.1 1.1 0 0 0 1.1-1.1V8.8a1.1 1.1 0 0 0-1.1-1.1H8.8M6.5 0.6v7.4M3.6 5l2.9 2.9L9.4 5" fill="none" stroke="currentColor" stroke-width="1.2"/></svg><b>Startup</b></span><span class="cf on"><svg class="ic" width="13" height="12" viewBox="0 0 13 12"><path d="M4.2 7.7H1.7a1.1 1.1 0 0 0-1.1 1.1v1.7a1.1 1.1 0 0 0 1.1 1.1h9.6a1.1 1.1 0 0 0 1.1-1.1V8.8a1.1 1.1 0 0 0-1.1-1.1H8.8M6.5 0.6v7.4M3.6 5l2.9 2.9L9.4 5" fill="none" stroke="currentColor" stroke-width="1.2"/></svg><b>Current</b></span><span class="cf off"><svg class="ic dc" width="10" height="12" viewBox="0 0 10 12"><path d="M1.6 1h4.6l2.8 2.8v6.6a0.8 0.8 0 0 1-0.8 0.8H1.6a0.8 0.8 0 0 1-0.8-0.8V1.8a0.8 0.8 0 0 1 0.8-0.8z" fill="none" stroke="currentColor" stroke-width="1.1"/><path d="M6 1v3h3z" fill="currentColor"/><path d="M5 3.9v3M3.5 5.4h3M3.5 8.6h3" fill="none" stroke="currentColor" stroke-width="1"/></svg><b>Changes</b></span></div></div>
<div class="row odd" style="top:477.5px"><div class="c c1"><span class="t" style="transform:scaleX(0.998)">L71-CP-embedded-mng</span></div><div class="c c2"><span class="t" style="transform:scaleX(0.944)">L71</span><span class="lkw" style="left:23.5px"><svg class="lk" width="13" height="7" viewBox="0 0 14 7" preserveAspectRatio="none"><path d="M5.8 0.8H3.6a2.7 2.7 0 0 0 0 5.4H5.8M8.2 0.8h2.2a2.7 2.7 0 0 1 0 5.4H8.2M4.6 3.5h4.8" fill="none" stroke="currentColor" stroke-width="1.25"/></svg></span></div><div class="c c3"><span class="t" style="transform:scaleX(0.983)">3 days, 22 hours, 14 minutes</span></div><div class="c c4"><span class="t" style="transform:scaleX(0.974)">10.71.112.141</span></div><div class="c c5"><span class="badge bs" style="width:42.2px"><span class="t" style="transform:scaleX(0.986)">saved</span></span></div><div class="c c6"><span class="cf off"><svg class="ic" width="13" height="12" viewBox="0 0 13 12"><path d="M4.2 7.7H1.7a1.1 1.1 0 0 0-1.1 1.1v1.7a1.1 1.1 0 0 0 1.1 1.1h9.6a1.1 1.1 0 0 0 1.1-1.1V8.8a1.1 1.1 0 0 0-1.1-1.1H8.8M6.5 0.6v7.4M3.6 5l2.9 2.9L9.4 5" fill="none" stroke="currentColor" stroke-width="1.2"/></svg><b>Startup</b></span><span class="cf on"><svg class="ic" width="13" height="12" viewBox="0 0 13 12"><path d="M4.2 7.7H1.7a1.1 1.1 0 0 0-1.1 1.1v1.7a1.1 1.1 0 0 0 1.1 1.1h9.6a1.1 1.1 0 0 0 1.1-1.1V8.8a1.1 1.1 0 0 0-1.1-1.1H8.8M6.5 0.6v7.4M3.6 5l2.9 2.9L9.4 5" fill="none" stroke="currentColor" stroke-width="1.2"/></svg><b>Current</b></span><span class="cf off"><svg class="ic dc" width="10" height="12" viewBox="0 0 10 12"><path d="M1.6 1h4.6l2.8 2.8v6.6a0.8 0.8 0 0 1-0.8 0.8H1.6a0.8 0.8 0 0 1-0.8-0.8V1.8a0.8 0.8 0 0 1 0.8-0.8z" fill="none" stroke="currentColor" stroke-width="1.1"/><path d="M6 1v3h3z" fill="currentColor"/><path d="M5 3.9v3M3.5 5.4h3M3.5 8.6h3" fill="none" stroke="currentColor" stroke-width="1"/></svg><b>Changes</b></span></div></div>
<div class="row even" style="top:509.5px"><div class="c c1"><span class="t" style="transform:scaleX(0.902)">L31EXR2</span></div><div class="c c2"><span class="t" style="transform:scaleX(0.944)">L31</span><span class="lkw" style="left:23.5px"><svg class="lk" width="13" height="7" viewBox="0 0 14 7" preserveAspectRatio="none"><path d="M5.8 0.8H3.6a2.7 2.7 0 0 0 0 5.4H5.8M8.2 0.8h2.2a2.7 2.7 0 0 1 0 5.4H8.2M4.6 3.5h4.8" fill="none" stroke="currentColor" stroke-width="1.25"/></svg></span></div><div class="c c3"><span class="t" style="transform:scaleX(0.983)">3 days, 22 hours, 21 minutes</span></div><div class="c c4"><span class="t" style="transform:scaleX(0.963)">10.31.255.102</span></div><div class="c c5"><span class="badge bs" style="width:42.2px"><span class="t" style="transform:scaleX(0.986)">saved</span></span></div><div class="c c6"><span class="cf on"><svg class="ic" width="13" height="12" viewBox="0 0 13 12"><path d="M4.2 7.7H1.7a1.1 1.1 0 0 0-1.1 1.1v1.7a1.1 1.1 0 0 0 1.1 1.1h9.6a1.1 1.1 0 0 0 1.1-1.1V8.8a1.1 1.1 0 0 0-1.1-1.1H8.8M6.5 0.6v7.4M3.6 5l2.9 2.9L9.4 5" fill="none" stroke="currentColor" stroke-width="1.2"/></svg><b>Startup</b></span><span class="cf on"><svg class="ic" width="13" height="12" viewBox="0 0 13 12"><path d="M4.2 7.7H1.7a1.1 1.1 0 0 0-1.1 1.1v1.7a1.1 1.1 0 0 0 1.1 1.1h9.6a1.1 1.1 0 0 0 1.1-1.1V8.8a1.1 1.1 0 0 0-1.1-1.1H8.8M6.5 0.6v7.4M3.6 5l2.9 2.9L9.4 5" fill="none" stroke="currentColor" stroke-width="1.2"/></svg><b>Current</b></span><span class="cf off"><svg class="ic dc" width="10" height="12" viewBox="0 0 10 12"><path d="M1.6 1h4.6l2.8 2.8v6.6a0.8 0.8 0 0 1-0.8 0.8H1.6a0.8 0.8 0 0 1-0.8-0.8V1.8a0.8 0.8 0 0 1 0.8-0.8z" fill="none" stroke="currentColor" stroke-width="1.1"/><path d="M6 1v3h3z" fill="currentColor"/><path d="M5 3.9v3M3.5 5.4h3M3.5 8.6h3" fill="none" stroke="currentColor" stroke-width="1"/></svg><b>Changes</b></span></div></div>
<div class="row odd" style="top:541.5px"><div class="c c1"><span class="t" style="transform:scaleX(0.919)">L43AC59</span></div><div class="c c2"><span class="t" style="transform:scaleX(0.944)">L43</span><span class="lkw" style="left:23.5px"><svg class="lk" width="13" height="7" viewBox="0 0 14 7" preserveAspectRatio="none"><path d="M5.8 0.8H3.6a2.7 2.7 0 0 0 0 5.4H5.8M8.2 0.8h2.2a2.7 2.7 0 0 1 0 5.4H8.2M4.6 3.5h4.8" fill="none" stroke="currentColor" stroke-width="1.25"/></svg></span></div><div class="c c3"><span class="t" style="transform:scaleX(0.983)">3 days, 22 hours, 21 minutes</span></div><div class="c c4"><span class="t" style="transform:scaleX(0.963)">10.43.159.185</span></div><div class="c c5"><span class="badge bs" style="width:42.2px"><span class="t" style="transform:scaleX(0.986)">saved</span></span></div><div class="c c6"><span class="cf on"><svg class="ic" width="13" height="12" viewBox="0 0 13 12"><path d="M4.2 7.7H1.7a1.1 1.1 0 0 0-1.1 1.1v1.7a1.1 1.1 0 0 0 1.1 1.1h9.6a1.1 1.1 0 0 0 1.1-1.1V8.8a1.1 1.1 0 0 0-1.1-1.1H8.8M6.5 0.6v7.4M3.6 5l2.9 2.9L9.4 5" fill="none" stroke="currentColor" stroke-width="1.2"/></svg><b>Startup</b></span><span class="cf on"><svg class="ic" width="13" height="12" viewBox="0 0 13 12"><path d="M4.2 7.7H1.7a1.1 1.1 0 0 0-1.1 1.1v1.7a1.1 1.1 0 0 0 1.1 1.1h9.6a1.1 1.1 0 0 0 1.1-1.1V8.8a1.1 1.1 0 0 0-1.1-1.1H8.8M6.5 0.6v7.4M3.6 5l2.9 2.9L9.4 5" fill="none" stroke="currentColor" stroke-width="1.2"/></svg><b>Current</b></span><span class="cf off"><svg class="ic dc" width="10" height="12" viewBox="0 0 10 12"><path d="M1.6 1h4.6l2.8 2.8v6.6a0.8 0.8 0 0 1-0.8 0.8H1.6a0.8 0.8 0 0 1-0.8-0.8V1.8a0.8 0.8 0 0 1 0.8-0.8z" fill="none" stroke="currentColor" stroke-width="1.1"/><path d="M6 1v3h3z" fill="currentColor"/><path d="M5 3.9v3M3.5 5.4h3M3.5 8.6h3" fill="none" stroke="currentColor" stroke-width="1"/></svg><b>Changes</b></span></div></div>
<div class="row even" style="top:573.5px"><div class="c c1"><span class="t" style="transform:scaleX(0.939)">L35AC115</span></div><div class="c c2"><span class="t" style="transform:scaleX(0.944)">L35</span><span class="lkw" style="left:23.5px"><svg class="lk" width="13" height="7" viewBox="0 0 14 7" preserveAspectRatio="none"><path d="M5.8 0.8H3.6a2.7 2.7 0 0 0 0 5.4H5.8M8.2 0.8h2.2a2.7 2.7 0 0 1 0 5.4H8.2M4.6 3.5h4.8" fill="none" stroke="currentColor" stroke-width="1.25"/></svg></span></div><div class="c c3"><span class="t" style="transform:scaleX(0.983)">3 days, 22 hours, 25 minutes</span></div><div class="c c4"><span class="t" style="transform:scaleX(0.974)">10.35.119.175</span></div><div class="c c5"><span class="badge bs" style="width:42.2px"><span class="t" style="transform:scaleX(0.986)">saved</span></span></div><div class="c c6"><span class="cf on"><svg class="ic" width="13" height="12" viewBox="0 0 13 12"><path d="M4.2 7.7H1.7a1.1 1.1 0 0 0-1.1 1.1v1.7a1.1 1.1 0 0 0 1.1 1.1h9.6a1.1 1.1 0 0 0 1.1-1.1V8.8a1.1 1.1 0 0 0-1.1-1.1H8.8M6.5 0.6v7.4M3.6 5l2.9 2.9L9.4 5" fill="none" stroke="currentColor" stroke-width="1.2"/></svg><b>Startup</b></span><span class="cf on"><svg class="ic" width="13" height="12" viewBox="0 0 13 12"><path d="M4.2 7.7H1.7a1.1 1.1 0 0 0-1.1 1.1v1.7a1.1 1.1 0 0 0 1.1 1.1h9.6a1.1 1.1 0 0 0 1.1-1.1V8.8a1.1 1.1 0 0 0-1.1-1.1H8.8M6.5 0.6v7.4M3.6 5l2.9 2.9L9.4 5" fill="none" stroke="currentColor" stroke-width="1.2"/></svg><b>Current</b></span><span class="cf off"><svg class="ic dc" width="10" height="12" viewBox="0 0 10 12"><path d="M1.6 1h4.6l2.8 2.8v6.6a0.8 0.8 0 0 1-0.8 0.8H1.6a0.8 0.8 0 0 1-0.8-0.8V1.8a0.8 0.8 0 0 1 0.8-0.8z" fill="none" stroke="currentColor" stroke-width="1.1"/><path d="M6 1v3h3z" fill="currentColor"/><path d="M5 3.9v3M3.5 5.4h3M3.5 8.6h3" fill="none" stroke="currentColor" stroke-width="1"/></svg><b>Changes</b></span></div></div>
<div class="row odd" style="top:605.5px"><div class="c c1"><span class="t" style="transform:scaleX(0.933)">HWLAB-FPR-1010</span></div><div class="c c2"><span class="t" style="transform:scaleX(0.924)">HWLAB</span><span class="lkw" style="left:45.7px"><svg class="lk" width="13" height="7" viewBox="0 0 14 7" preserveAspectRatio="none"><path d="M5.8 0.8H3.6a2.7 2.7 0 0 0 0 5.4H5.8M8.2 0.8h2.2a2.7 2.7 0 0 1 0 5.4H8.2M4.6 3.5h4.8" fill="none" stroke="currentColor" stroke-width="1.25"/></svg></span></div><div class="c c3"><span class="t" style="transform:scaleX(0.968)">2 weeks, 3 days, 23 hours</span></div><div class="c c4"><span class="t" style="transform:scaleX(0.963)">10.64.128.44</span></div><div class="c c5"><span class="badge bc" style="width:58.5px"><span class="t" style="transform:scaleX(1.012)">changed</span></span></div><div class="c c6"><span class="cf on"><svg class="ic" width="13" height="12" viewBox="0 0 13 12"><path d="M4.2 7.7H1.7a1.1 1.1 0 0 0-1.1 1.1v1.7a1.1 1.1 0 0 0 1.1 1.1h9.6a1.1 1.1 0 0 0 1.1-1.1V8.8a1.1 1.1 0 0 0-1.1-1.1H8.8M6.5 0.6v7.4M3.6 5l2.9 2.9L9.4 5" fill="none" stroke="currentColor" stroke-width="1.2"/></svg><b>Startup</b></span><span class="cf on"><svg class="ic" width="13" height="12" viewBox="0 0 13 12"><path d="M4.2 7.7H1.7a1.1 1.1 0 0 0-1.1 1.1v1.7a1.1 1.1 0 0 0 1.1 1.1h9.6a1.1 1.1 0 0 0 1.1-1.1V8.8a1.1 1.1 0 0 0-1.1-1.1H8.8M6.5 0.6v7.4M3.6 5l2.9 2.9L9.4 5" fill="none" stroke="currentColor" stroke-width="1.2"/></svg><b>Current</b></span><span class="cf on"><svg class="ic dc" width="10" height="12" viewBox="0 0 10 12"><path d="M1.6 1h4.6l2.8 2.8v6.6a0.8 0.8 0 0 1-0.8 0.8H1.6a0.8 0.8 0 0 1-0.8-0.8V1.8a0.8 0.8 0 0 1 0.8-0.8z" fill="none" stroke="currentColor" stroke-width="1.1"/><path d="M6 1v3h3z" fill="currentColor"/><path d="M5 3.9v3M3.5 5.4h3M3.5 8.6h3" fill="none" stroke="currentColor" stroke-width="1"/></svg><b>Changes</b></span></div></div>
<div class="row even" style="top:637.5px"><div class="c c1"><span class="t" style="transform:scaleX(0.919)">L43AC21</span></div><div class="c c2"><span class="t" style="transform:scaleX(0.944)">L43</span><span class="lkw" style="left:23.5px"><svg class="lk" width="13" height="7" viewBox="0 0 14 7" preserveAspectRatio="none"><path d="M5.8 0.8H3.6a2.7 2.7 0 0 0 0 5.4H5.8M8.2 0.8h2.2a2.7 2.7 0 0 1 0 5.4H8.2M4.6 3.5h4.8" fill="none" stroke="currentColor" stroke-width="1.25"/></svg></span></div><div class="c c3"><span class="t" style="transform:scaleX(0.983)">3 days, 22 hours, 21 minutes</span></div><div class="c c4"><span class="t" style="transform:scaleX(0.963)">10.43.129.186</span></div><div class="c c5"><span class="badge bs" style="width:42.2px"><span class="t" style="transform:scaleX(0.986)">saved</span></span></div><div class="c c6"><span class="cf on"><svg class="ic" width="13" height="12" viewBox="0 0 13 12"><path d="M4.2 7.7H1.7a1.1 1.1 0 0 0-1.1 1.1v1.7a1.1 1.1 0 0 0 1.1 1.1h9.6a1.1 1.1 0 0 0 1.1-1.1V8.8a1.1 1.1 0 0 0-1.1-1.1H8.8M6.5 0.6v7.4M3.6 5l2.9 2.9L9.4 5" fill="none" stroke="currentColor" stroke-width="1.2"/></svg><b>Startup</b></span><span class="cf on"><svg class="ic" width="13" height="12" viewBox="0 0 13 12"><path d="M4.2 7.7H1.7a1.1 1.1 0 0 0-1.1 1.1v1.7a1.1 1.1 0 0 0 1.1 1.1h9.6a1.1 1.1 0 0 0 1.1-1.1V8.8a1.1 1.1 0 0 0-1.1-1.1H8.8M6.5 0.6v7.4M3.6 5l2.9 2.9L9.4 5" fill="none" stroke="currentColor" stroke-width="1.2"/></svg><b>Current</b></span><span class="cf off"><svg class="ic dc" width="10" height="12" viewBox="0 0 10 12"><path d="M1.6 1h4.6l2.8 2.8v6.6a0.8 0.8 0 0 1-0.8 0.8H1.6a0.8 0.8 0 0 1-0.8-0.8V1.8a0.8 0.8 0 0 1 0.8-0.8z" fill="none" stroke="currentColor" stroke-width="1.1"/><path d="M6 1v3h3z" fill="currentColor"/><path d="M5 3.9v3M3.5 5.4h3M3.5 8.6h3" fill="none" stroke="currentColor" stroke-width="1"/></svg><b>Changes</b></span></div></div>
<div class="row odd" style="top:669.5px"><div class="c c1"><span class="t" style="transform:scaleX(0.919)">L36AC53</span></div><div class="c c2"><span class="t" style="transform:scaleX(0.944)">L36</span><span class="lkw" style="left:23.5px"><svg class="lk" width="13" height="7" viewBox="0 0 14 7" preserveAspectRatio="none"><path d="M5.8 0.8H3.6a2.7 2.7 0 0 0 0 5.4H5.8M8.2 0.8h2.2a2.7 2.7 0 0 1 0 5.4H8.2M4.6 3.5h4.8" fill="none" stroke="currentColor" stroke-width="1.25"/></svg></span></div><div class="c c3"><span class="t" style="transform:scaleX(0.983)">3 days, 22 hours, 23 minutes</span></div><div class="c c4"><span class="t" style="transform:scaleX(0.963)">10.36.159.106</span></div><div class="c c5"><span class="badge bs" style="width:42.2px"><span class="t" style="transform:scaleX(0.986)">saved</span></span></div><div class="c c6"><span class="cf on"><svg class="ic" width="13" height="12" viewBox="0 0 13 12"><path d="M4.2 7.7H1.7a1.1 1.1 0 0 0-1.1 1.1v1.7a1.1 1.1 0 0 0 1.1 1.1h9.6a1.1 1.1 0 0 0 1.1-1.1V8.8a1.1 1.1 0 0 0-1.1-1.1H8.8M6.5 0.6v7.4M3.6 5l2.9 2.9L9.4 5" fill="none" stroke="currentColor" stroke-width="1.2"/></svg><b>Startup</b></span><span class="cf on"><svg class="ic" width="13" height="12" viewBox="0 0 13 12"><path d="M4.2 7.7H1.7a1.1 1.1 0 0 0-1.1 1.1v1.7a1.1 1.1 0 0 0 1.1 1.1h9.6a1.1 1.1 0 0 0 1.1-1.1V8.8a1.1 1.1 0 0 0-1.1-1.1H8.8M6.5 0.6v7.4M3.6 5l2.9 2.9L9.4 5" fill="none" stroke="currentColor" stroke-width="1.2"/></svg><b>Current</b></span><span class="cf off"><svg class="ic dc" width="10" height="12" viewBox="0 0 10 12"><path d="M1.6 1h4.6l2.8 2.8v6.6a0.8 0.8 0 0 1-0.8 0.8H1.6a0.8 0.8 0 0 1-0.8-0.8V1.8a0.8 0.8 0 0 1 0.8-0.8z" fill="none" stroke="currentColor" stroke-width="1.1"/><path d="M6 1v3h3z" fill="currentColor"/><path d="M5 3.9v3M3.5 5.4h3M3.5 8.6h3" fill="none" stroke="currentColor" stroke-width="1"/></svg><b>Changes</b></span></div></div>
<div class="row even" style="top:701.5px"><div class="c c1"><span class="t" style="transform:scaleX(0.919)">L43AC24</span></div><div class="c c2"><span class="t" style="transform:scaleX(0.944)">L43</span><span class="lkw" style="left:23.5px"><svg class="lk" width="13" height="7" viewBox="0 0 14 7" preserveAspectRatio="none"><path d="M5.8 0.8H3.6a2.7 2.7 0 0 0 0 5.4H5.8M8.2 0.8h2.2a2.7 2.7 0 0 1 0 5.4H8.2M4.6 3.5h4.8" fill="none" stroke="currentColor" stroke-width="1.25"/></svg></span></div><div class="c c3"><span class="t" style="transform:scaleX(0.983)">3 days, 22 hours, 19 minutes</span></div><div class="c c4"><span class="t" style="transform:scaleX(0.963)">10.43.129.189</span></div><div class="c c5"><span class="badge bs" style="width:42.2px"><span class="t" style="transform:scaleX(0.986)">saved</span></span></div><div class="c c6"><span class="cf on"><svg class="ic" width="13" height="12" viewBox="0 0 13 12"><path d="M4.2 7.7H1.7a1.1 1.1 0 0 0-1.1 1.1v1.7a1.1 1.1 0 0 0 1.1 1.1h9.6a1.1 1.1 0 0 0 1.1-1.1V8.8a1.1 1.1 0 0 0-1.1-1.1H8.8M6.5 0.6v7.4M3.6 5l2.9 2.9L9.4 5" fill="none" stroke="currentColor" stroke-width="1.2"/></svg><b>Startup</b></span><span class="cf on"><svg class="ic" width="13" height="12" viewBox="0 0 13 12"><path d="M4.2 7.7H1.7a1.1 1.1 0 0 0-1.1 1.1v1.7a1.1 1.1 0 0 0 1.1 1.1h9.6a1.1 1.1 0 0 0 1.1-1.1V8.8a1.1 1.1 0 0 0-1.1-1.1H8.8M6.5 0.6v7.4M3.6 5l2.9 2.9L9.4 5" fill="none" stroke="currentColor" stroke-width="1.2"/></svg><b>Current</b></span><span class="cf off"><svg class="ic dc" width="10" height="12" viewBox="0 0 10 12"><path d="M1.6 1h4.6l2.8 2.8v6.6a0.8 0.8 0 0 1-0.8 0.8H1.6a0.8 0.8 0 0 1-0.8-0.8V1.8a0.8 0.8 0 0 1 0.8-0.8z" fill="none" stroke="currentColor" stroke-width="1.1"/><path d="M6 1v3h3z" fill="currentColor"/><path d="M5 3.9v3M3.5 5.4h3M3.5 8.6h3" fill="none" stroke="currentColor" stroke-width="1"/></svg><b>Changes</b></span></div></div>
<div class="row odd" style="top:733.5px"><div class="c c1"><span class="t" style="transform:scaleX(0.919)">L43AC30</span></div><div class="c c2"><span class="t" style="transform:scaleX(0.944)">L43</span><span class="lkw" style="left:23.5px"><svg class="lk" width="13" height="7" viewBox="0 0 14 7" preserveAspectRatio="none"><path d="M5.8 0.8H3.6a2.7 2.7 0 0 0 0 5.4H5.8M8.2 0.8h2.2a2.7 2.7 0 0 1 0 5.4H8.2M4.6 3.5h4.8" fill="none" stroke="currentColor" stroke-width="1.25"/></svg></span></div><div class="c c3"><span class="t" style="transform:scaleX(0.983)">3 days, 22 hours, 21 minutes</span></div><div class="c c4"><span class="t" style="transform:scaleX(0.963)">10.43.129.190</span></div><div class="c c5"><span class="badge bs" style="width:42.2px"><span class="t" style="transform:scaleX(0.986)">saved</span></span></div><div class="c c6"><span class="cf on"><svg class="ic" width="13" height="12" viewBox="0 0 13 12"><path d="M4.2 7.7H1.7a1.1 1.1 0 0 0-1.1 1.1v1.7a1.1 1.1 0 0 0 1.1 1.1h9.6a1.1 1.1 0 0 0 1.1-1.1V8.8a1.1 1.1 0 0 0-1.1-1.1H8.8M6.5 0.6v7.4M3.6 5l2.9 2.9L9.4 5" fill="none" stroke="currentColor" stroke-width="1.2"/></svg><b>Startup</b></span><span class="cf on"><svg class="ic" width="13" height="12" viewBox="0 0 13 12"><path d="M4.2 7.7H1.7a1.1 1.1 0 0 0-1.1 1.1v1.7a1.1 1.1 0 0 0 1.1 1.1h9.6a1.1 1.1 0 0 0 1.1-1.1V8.8a1.1 1.1 0 0 0-1.1-1.1H8.8M6.5 0.6v7.4M3.6 5l2.9 2.9L9.4 5" fill="none" stroke="currentColor" stroke-width="1.2"/></svg><b>Current</b></span><span class="cf off"><svg class="ic dc" width="10" height="12" viewBox="0 0 10 12"><path d="M1.6 1h4.6l2.8 2.8v6.6a0.8 0.8 0 0 1-0.8 0.8H1.6a0.8 0.8 0 0 1-0.8-0.8V1.8a0.8 0.8 0 0 1 0.8-0.8z" fill="none" stroke="currentColor" stroke-width="1.1"/><path d="M6 1v3h3z" fill="currentColor"/><path d="M5 3.9v3M3.5 5.4h3M3.5 8.6h3" fill="none" stroke="currentColor" stroke-width="1"/></svg><b>Changes</b></span></div></div>
</div>
</body></html>
